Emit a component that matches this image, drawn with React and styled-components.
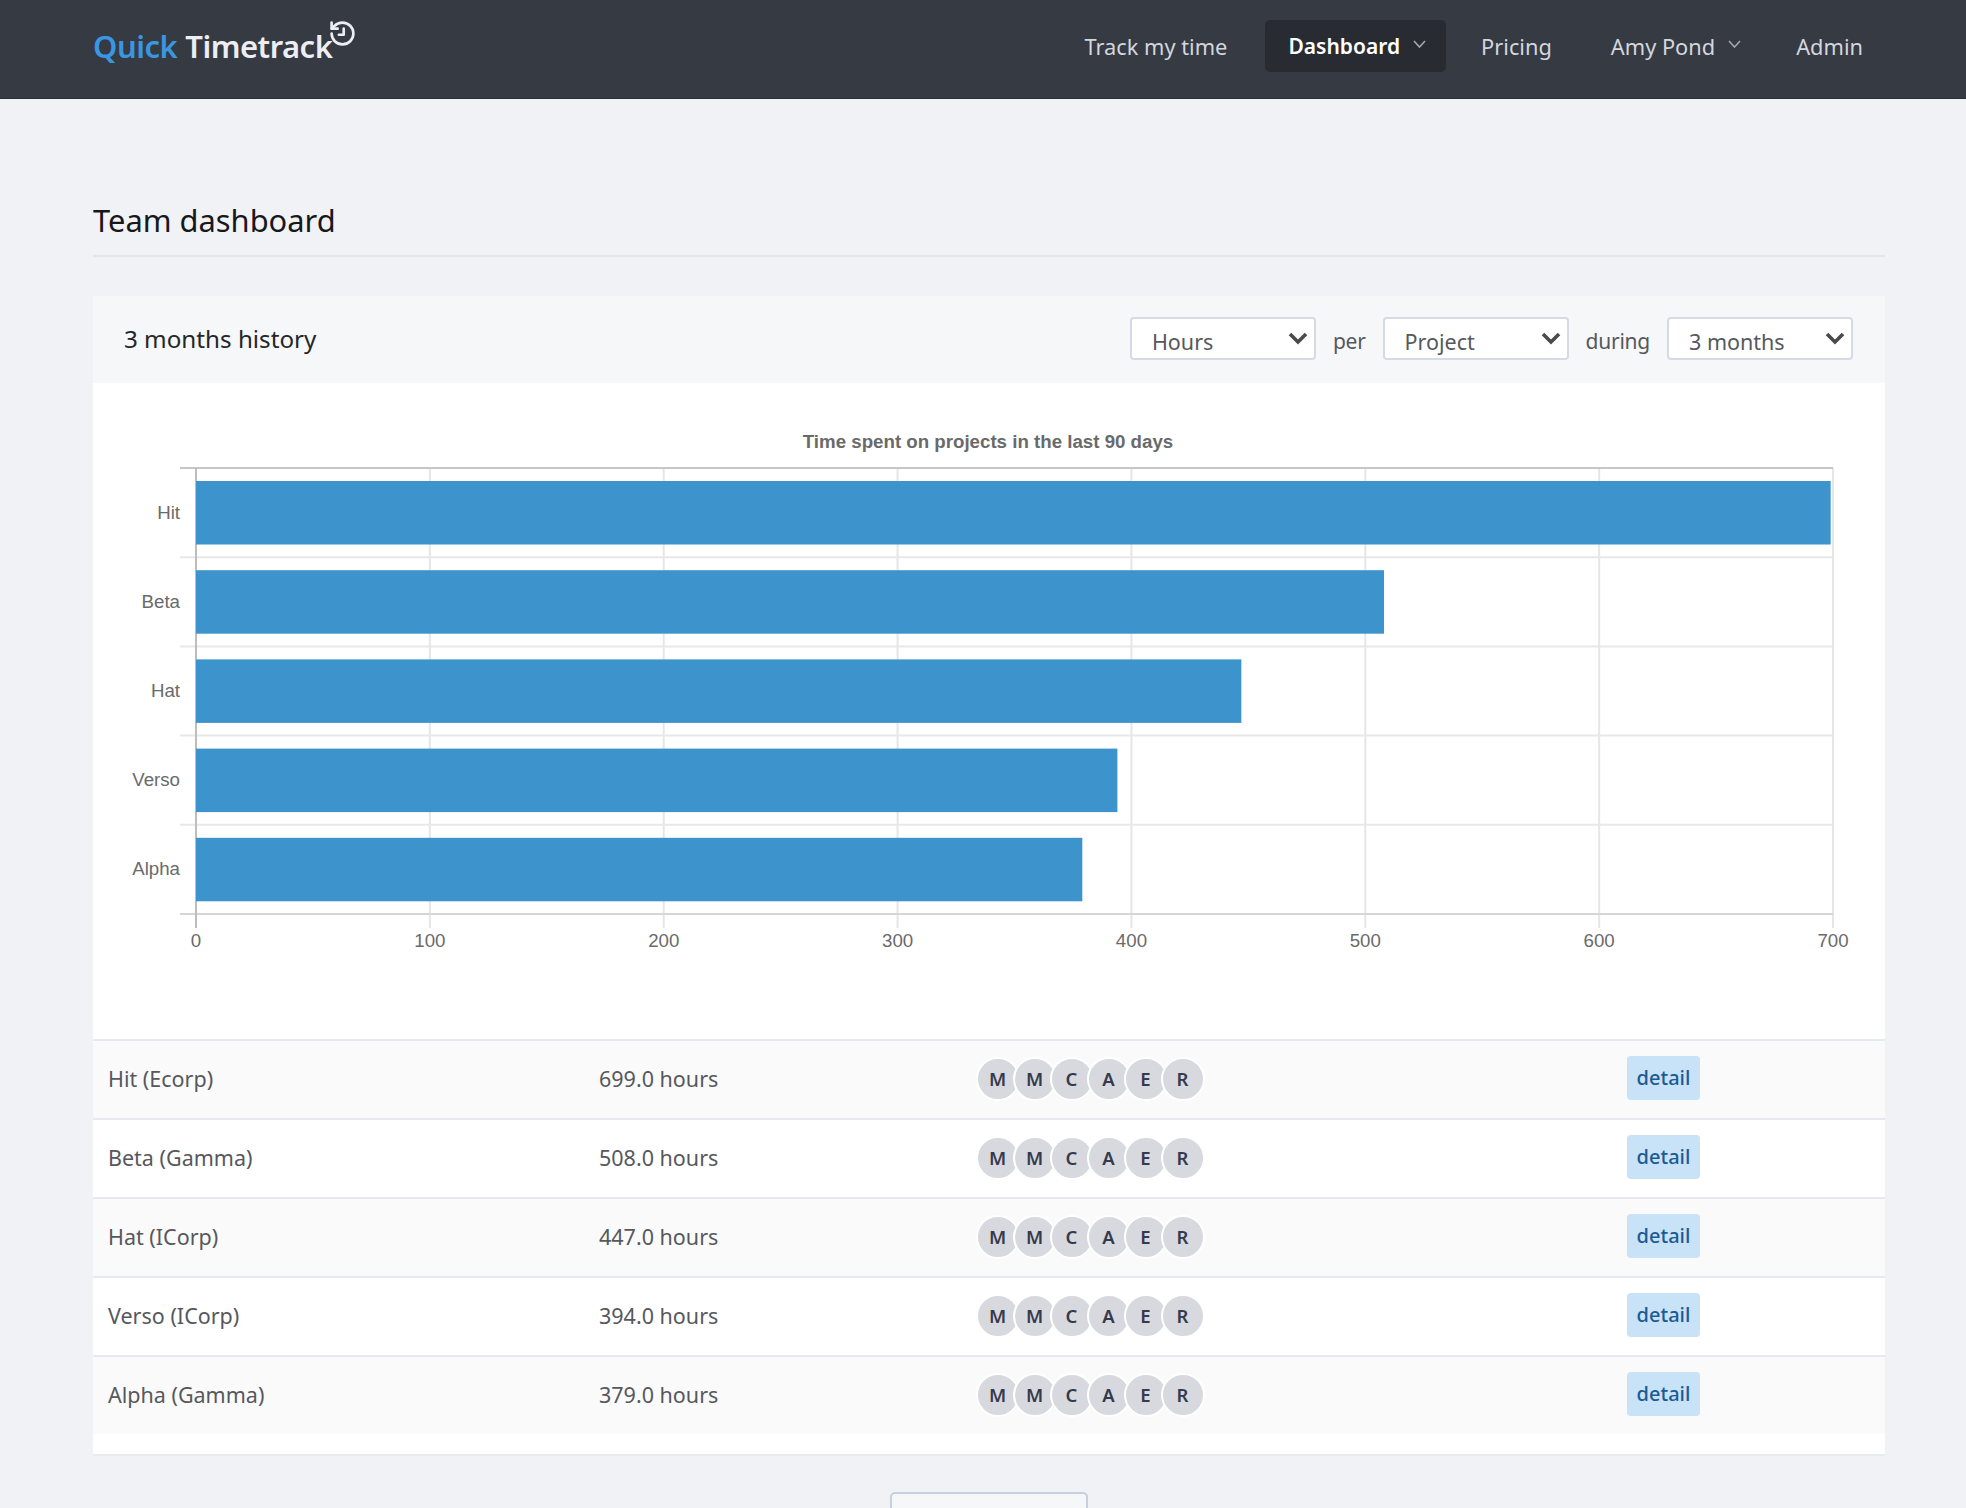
import React from 'react';
import styled, { createGlobalStyle } from 'styled-components';

const GlobalStyle = createGlobalStyle`
  html, body {
    margin: 0;
    height: 1508px;
    overflow: hidden;
    background: #f1f2f6;
    font-family: "Noto Sans", "Open Sans", sans-serif;
  }
  * { box-sizing: border-box; }
`;

const Navbar = styled.nav`
  height: 99px;
  padding: 0 103px 6px 93px;
  display: flex;
  align-items: center;
  justify-content: space-between;
  background: #353a43;
  border-bottom: 1px solid #2a2e35;
`;

const Brand = styled.a`
  display: flex;
  align-items: flex-start;
  font-size: 31px;
  font-weight: 600;
  letter-spacing: -0.5px;
  color: #eceef3;
`;

const BrandAccent = styled.span`
  color: #3a96e0;
  margin-right: 8px;
`;

const BrandIcon = styled.svg`
  width: 29px;
  height: 29px;
  margin: -6px -4px 0 -4px;
  fill: none;
  stroke: #eceef3;
  stroke-width: 2.2;
  stroke-linecap: round;
  stroke-linejoin: round;
`;

const NavItems = styled.div`
  display: flex;
  align-items: center;
`;

const NavItem = styled.a`
  height: 52px;
  margin-left: ${(p) => p.$gap}px;
  padding: 0 ${(p) => (p.$active ? 20 : 0)}px 0 ${(p) => (p.$active ? 23 : 0)}px;
  display: flex;
  align-items: center;
  gap: 13px;
  border-radius: 5px;
  font-size: ${(p) => (p.$active ? 21 : 21.8)}px;
  font-weight: ${(p) => (p.$active ? 600 : 400)};
  color: ${(p) => (p.$active ? '#ffffff' : '#d3d6dd')};
  background: ${(p) => (p.$active ? '#282b32' : 'transparent')};
`;

const Caret = styled.svg`
  width: 13px;
  height: 8px;
  margin-bottom: 4px;
  fill: none;
  stroke: #a5a8ae;
  stroke-width: 1.6;
`;

const Main = styled.main`
  padding: 0 81px 0 93px;
`;

const Title = styled.h1`
  margin: 0;
  padding-top: 99px;
  height: 158px;
  font-size: 30.85px;
  line-height: 44px;
  font-weight: 400;
  color: #17181a;
  border-bottom: 2px solid #e3e5eb;
`;

const Panel = styled.section`
  margin-top: 39px;
  padding-bottom: 20px;
  background: #ffffff;
  border-bottom: 2px solid #e9ebf0;
`;

const PanelHead = styled.header`
  height: 87px;
  padding: 0 32px 2px 31px;
  display: flex;
  align-items: center;
  justify-content: space-between;
  background: #f6f7f9;
`;

const PanelTitle = styled.h2`
  margin: 0;
  font-size: 24.2px;
  font-weight: 400;
  color: #25262a;
`;

const Filters = styled.div`
  display: flex;
  align-items: center;
  gap: 17px;
`;

const FilterLabel = styled.span`
  font-size: 21px;
  letter-spacing: -0.25px;
  line-height: 30px;
  padding-top: 5px;
  color: #56585d;
`;

const SelectWrap = styled.div`
  position: relative;
  width: 186px;
  height: 43px;
`;

const Select = styled.select`
  appearance: none;
  width: 100%;
  height: 100%;
  padding: 6px 0 0 20px;
  font-family: inherit;
  font-size: 21.5px;
  color: #56585d;
  background: #ffffff;
  border: 2px solid #d5dae5;
  border-radius: 4px;
`;

const SelectArrow = styled.svg`
  position: absolute;
  top: 15px;
  right: 8px;
  width: 20px;
  height: 13px;
  fill: none;
  stroke: #4a4a4a;
  stroke-width: 3.6;
  pointer-events: none;
`;

const ChartSvg = styled.svg`
  display: block;
  width: 1792px;
  height: 656px;
  font-family: "Liberation Sans", Arial, sans-serif;
  font-size: 18.7px;
  fill: #6a6a6a;
`;

const ChartTitle = styled.text`
  font-weight: 700;
  text-anchor: middle;
`;

const Row = styled.div`
  height: 79px;
  padding: 0 0 2px 15px;
  display: grid;
  grid-template-columns: 491px 377px 651px 1fr;
  align-items: center;
  font-size: 21.5px;
  color: #56585d;
  background: ${(p) => (p.$striped ? '#fafafa' : '#ffffff')};
  border-top: 2px solid #e6e9f0;
`;

const Team = styled.div`
  display: flex;
`;

const Avatar = styled.span`
  width: 44px;
  height: 44px;
  margin-left: ${(p) => (p.$first ? 0 : -7)}px;
  padding-right: 1px;
  display: flex;
  align-items: center;
  justify-content: center;
  font-size: 18.5px;
  font-weight: 600;
  color: #363a4d;
  background: #d8d9de;
  border: 2px solid #ffffff;
  border-radius: 50%;
`;

const DetailButton = styled.a`
  width: 73px;
  height: 44px;
  margin-bottom: 2px;
  display: flex;
  align-items: center;
  justify-content: center;
  font-size: 20px;
  font-weight: 500;
  color: #1c5a95;
  background: #c8e2f8;
  border-radius: 4px;
`;

const Footer = styled.div`
  display: flex;
  justify-content: center;
  padding-top: 36px;
`;

const LoadMore = styled.button`
  width: 198px;
  height: 60px;
  background: #f6f7f9;
  border: 2px solid #c6d0df;
  border-radius: 5px;
`;

const projects = [
  { name: 'Hit', client: 'Ecorp', hours: 699 },
  { name: 'Beta', client: 'Gamma', hours: 508 },
  { name: 'Hat', client: 'ICorp', hours: 447 },
  { name: 'Verso', client: 'ICorp', hours: 394 },
  { name: 'Alpha', client: 'Gamma', hours: 379 },
];

const team = ['M', 'M', 'C', 'A', 'E', 'R'];
const ticks = [0, 100, 200, 300, 400, 500, 600, 700];

// chart geometry, in the coordinates of the panel
const X0 = 103;
const UNIT = 2.3386;
const TOP = 85;
const BAND = 89.2;
const x = (v) => X0 + v * UNIT;

const Chart = () => (
  <ChartSvg viewBox="0 0 1792 656">
    <ChartTitle x="895" y="64.5">Time spent on projects in the last 90 days</ChartTitle>
    {ticks.slice(1).map((t) => (
      <line key={t} x1={x(t)} x2={x(t)} y1={TOP} y2={TOP + BAND * 5 + 14} stroke="#e6e6e6" strokeWidth="2" />
    ))}
    {[1, 2, 3, 4].map((i) => (
      <line key={i} x1="87" x2={x(700)} y1={TOP + BAND * i} y2={TOP + BAND * i} stroke="#e8e8e8" strokeWidth="2" />
    ))}
    <line x1="87" x2={x(700)} y1={TOP} y2={TOP} stroke="#c6c6c6" strokeWidth="2" />
    <line x1="87" x2={x(700)} y1={TOP + BAND * 5} y2={TOP + BAND * 5} stroke="#d6d6d6" strokeWidth="2" />
    <line x1={X0} x2={X0} y1={TOP} y2={TOP + BAND * 5 + 14} stroke="#bdbdbd" strokeWidth="2" />
    {projects.map((p, i) => (
      <g key={p.name}>
        <rect x={X0} y={TOP + 13 + BAND * i} width={p.hours * UNIT} height="63.5" fill="#3d94cd" />
        <text x="87" y={TOP + 50.5 + BAND * i} textAnchor="end">{p.name}</text>
      </g>
    ))}
    {ticks.map((t) => (
      <text key={t} x={x(t)} y="564" textAnchor="middle">{t}</text>
    ))}
  </ChartSvg>
);

const Chevron = () => (
  <Caret viewBox="0 0 13 8"><path d="M1 1l5.5 6L12 1" /></Caret>
);

const Filter = ({ value }) => (
  <SelectWrap>
    <Select defaultValue={value}>
      <option>{value}</option>
    </Select>
    <SelectArrow viewBox="0 0 20 13"><path d="M2 2l8 8 8-8" /></SelectArrow>
  </SelectWrap>
);

export default function App() {
  return (
    <>
      <GlobalStyle />
      <Navbar>
        <Brand>
          <BrandAccent>Quick</BrandAccent>Timetrack
          <BrandIcon viewBox="0 0 24 24">
            <path d="M3 12a9 9 0 1 0 9-9 9.75 9.75 0 0 0-6.74 2.74L3 8" />
            <path d="M3 3v5h5" />
            <path d="M13 8v5H9" />
          </BrandIcon>
        </Brand>
        <NavItems>
          <NavItem $gap={0}>Track my time</NavItem>
          <NavItem $gap={38} $active>Dashboard <Chevron /></NavItem>
          <NavItem $gap={35}>Pricing</NavItem>
          <NavItem $gap={59}>Amy Pond <Chevron /></NavItem>
          <NavItem $gap={55}>Admin</NavItem>
        </NavItems>
      </Navbar>
      <Main>
        <Title>Team dashboard</Title>
        <Panel>
          <PanelHead>
            <PanelTitle>3 months history</PanelTitle>
            <Filters>
              <Filter value="Hours" />
              <FilterLabel>per</FilterLabel>
              <Filter value="Project" />
              <FilterLabel>during</FilterLabel>
              <Filter value="3 months" />
            </Filters>
          </PanelHead>
          <Chart />
          {projects.map((p, i) => (
            <Row key={p.name} $striped={i % 2 === 0}>
              <span>{p.name} ({p.client})</span>
              <span>{p.hours.toFixed(1)} hours</span>
              <Team>
                {team.map((t, j) => (
                  <Avatar key={j} $first={j === 0}>{t}</Avatar>
                ))}
              </Team>
              <DetailButton>detail</DetailButton>
            </Row>
          ))}
        </Panel>
        <Footer>
          <LoadMore />
        </Footer>
      </Main>
    </>
  );
}
